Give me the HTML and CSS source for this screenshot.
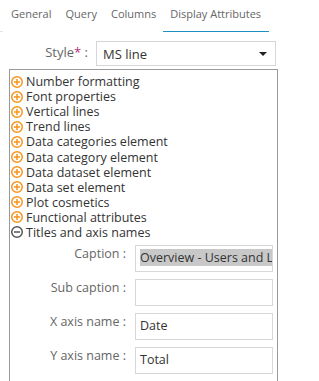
FILE: index.html
```html
<!DOCTYPE html>
<html lang="en">
<head>
    <meta charset="UTF-8">
    <meta name="viewport" content="width=device-width, initial-scale=1.0">
    <title>Display Attributes</title>
    <link rel="stylesheet" href="styles.css">
</head>
<body>

    <div class="tabs">
        <span class="tab">General</span>
        <span class="tab">Query</span>
        <span class="tab">Columns</span>
        <span class="tab active">Display Attributes</span>
    </div>

    <div class="style-row">
        <label class="style-label">Style<span class="req">*</span> :</label>
        <div class="select">
            <span>MS line</span>
            <span class="caret"></span>
        </div>
    </div>

    <div class="panel">
        <div class="item"><svg class="icon" viewBox="0 0 12 12"><circle cx="6" cy="6" r="5.25"/><path d="M3 6h6M6 3v6"/></svg>Number formatting</div>
        <div class="item"><svg class="icon" viewBox="0 0 12 12"><circle cx="6" cy="6" r="5.25"/><path d="M3 6h6M6 3v6"/></svg>Font properties</div>
        <div class="item"><svg class="icon" viewBox="0 0 12 12"><circle cx="6" cy="6" r="5.25"/><path d="M3 6h6M6 3v6"/></svg>Vertical lines</div>
        <div class="item"><svg class="icon" viewBox="0 0 12 12"><circle cx="6" cy="6" r="5.25"/><path d="M3 6h6M6 3v6"/></svg>Trend lines</div>
        <div class="item"><svg class="icon" viewBox="0 0 12 12"><circle cx="6" cy="6" r="5.25"/><path d="M3 6h6M6 3v6"/></svg>Data categories element</div>
        <div class="item"><svg class="icon" viewBox="0 0 12 12"><circle cx="6" cy="6" r="5.25"/><path d="M3 6h6M6 3v6"/></svg>Data category element</div>
        <div class="item"><svg class="icon" viewBox="0 0 12 12"><circle cx="6" cy="6" r="5.25"/><path d="M3 6h6M6 3v6"/></svg>Data dataset element</div>
        <div class="item"><svg class="icon" viewBox="0 0 12 12"><circle cx="6" cy="6" r="5.25"/><path d="M3 6h6M6 3v6"/></svg>Data set element</div>
        <div class="item"><svg class="icon" viewBox="0 0 12 12"><circle cx="6" cy="6" r="5.25"/><path d="M3 6h6M6 3v6"/></svg>Plot cosmetics</div>
        <div class="item"><svg class="icon" viewBox="0 0 12 12"><circle cx="6" cy="6" r="5.25"/><path d="M3 6h6M6 3v6"/></svg>Functional attributes</div>
        <div class="item"><svg class="icon minus" viewBox="0 0 12 12"><circle cx="6" cy="6" r="5.25"/><path d="M3 6h6"/></svg>Titles and axis names</div>

        <div class="fields">
            <div class="field">
                <label>Caption :</label>
                <div class="input"><span class="selected">Overview - Users and Logins</span></div>
            </div>
            <div class="field">
                <label>Sub caption :</label>
                <div class="input"></div>
            </div>
            <div class="field">
                <label>X axis name :</label>
                <div class="input">Date</div>
            </div>
            <div class="field">
                <label>Y axis name :</label>
                <div class="input">Total</div>
            </div>
        </div>

        <div class="item"><svg class="icon" viewBox="0 0 12 12"><circle cx="6" cy="6" r="5.25"/><path d="M3 6h6M6 3v6"/></svg>Legend</div>
    </div>

</body>
</html>
```

FILE: styles.css
```css
* {
    margin: 0;
    padding: 0;
    box-sizing: border-box;
}

body {
    font-family: "Open Sans", sans-serif;
    font-size: 12px;
    color: #333;
    background: #fff;
    overflow: hidden;
}

.tabs {
    position: relative;
    display: flex;
    height: 32px;
    padding-left: 4px;
}

.tabs::before {
    content: "";
    position: absolute;
    left: 0;
    bottom: 0;
    width: 3px;
    border-bottom: 1px solid #e2e2e2;
}

.tab {
    padding: 6px 7px 0;
    font-size: 11px;
    color: #666;
}

.tab.active {
    border-bottom: 1px solid #1b8ec2;
    padding-right: 8px;
}

.style-row {
    display: flex;
    align-items: flex-start;
    margin-top: 9px;
}

.style-label {
    width: 88px;
    text-align: right;
    font-size: 13px;
    color: #666;
    padding-top: 2px;
}

.req {
    color: #b2307a;
}

.select {
    display: flex;
    align-items: center;
    justify-content: space-between;
    margin-left: 8px;
    width: 180px;
    height: 25px;
    border: 1px solid #d6d6d6;
    padding: 0 8px 0 6px;
    font-size: 13px;
    color: #333;
}

.caret {
    width: 0;
    height: 0;
    border-left: 4px solid transparent;
    border-right: 4px solid transparent;
    border-top: 4px solid #222;
}

.panel {
    margin: 3px 0 0 9px;
    width: 269px;
    border: 1px solid #9a9a9a;
    border-bottom: none;
    padding: 4px 0 0 1px;
    height: 320px;
}

.item {
    display: flex;
    align-items: center;
    height: 15.1px;
    line-height: 15px;
    font-size: 12.5px;
    white-space: nowrap;
}

.icon {
    width: 12px;
    height: 12px;
    margin-right: 3px;
    flex-shrink: 0;
    fill: none;
    stroke: #f7941d;
    stroke-width: 1.5;
}

.icon.minus {
    stroke: #555;
}

.fields {
    padding: 5px 0 1px;
}

.field {
    display: flex;
    align-items: flex-start;
    margin-bottom: 7px;
}

.field label {
    width: 115px;
    text-align: right;
    color: #666;
    font-size: 12.5px;
    padding-top: 0;
}

.field .input {
    margin-left: 9px;
    width: 138px;
    height: 27px;
    border: 1px solid #d8d8d8;
    padding: 3px 4px 0;
    white-space: nowrap;
    overflow: hidden;
    line-height: 18px;
    font-size: 12.5px;
}

.selected {
    background: #c8c8c8;
}
```
